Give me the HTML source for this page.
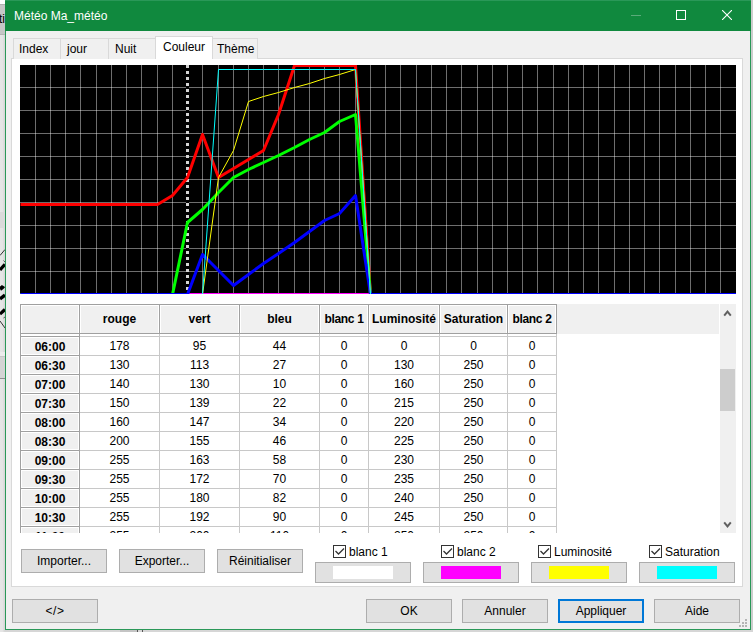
<!DOCTYPE html>
<html><head><meta charset="utf-8"><style>
*{margin:0;padding:0;box-sizing:border-box}
html,body{width:753px;height:632px;overflow:hidden;background:#e9e9e9;font-family:"Liberation Sans",sans-serif;font-size:12px;color:#000}
.abs{position:absolute}
.win{position:absolute;left:5px;top:0;width:746px;height:630px;background:#f0f0f0;border:1px solid #2a9858}
.title{position:absolute;left:5px;top:0;width:746px;height:31px;background:#10893e;border-top:1px solid #2a9858}
.tab{position:absolute;top:38px;height:21px;border:1px solid #d9d9d9;border-bottom:none;background:#f0f0f0;white-space:nowrap}
.tab span{position:absolute;top:3px}
.btn{position:absolute;height:24px;background:#e1e1e1;border:1px solid #adadad;text-align:center;line-height:22px;white-space:nowrap}
.hc{position:absolute;height:29px;background:#f0f0f0;box-shadow:inset 0 0 0 1px #fff;font-weight:bold;text-align:center;line-height:29px;white-space:nowrap}
.rh{position:absolute;height:18px;background:#f0f0f0;box-shadow:inset 0 0 0 1px #fff;font-weight:bold;text-align:center;line-height:20px}
.dc{position:absolute;height:18px;background:#fff;text-align:center;line-height:18px}
.cb{position:absolute;width:13px;height:13px;border:1px solid #333;background:#fff}
.cbl{position:absolute;white-space:nowrap}
</style></head><body>
<div class="abs" style="left:0;top:0;width:5px;height:5px;background:#fff"></div>
<div class="abs" style="left:0;top:4px;width:5px;height:31px;background:#c6c6c6;border-top:1px solid #b0b0b0;border-bottom:1px solid #b4b4b4;overflow:hidden"><div class="abs" style="left:-1px;top:7px;font-size:12px;color:#000;white-space:nowrap">ti</div></div>
<div class="abs" style="left:0;top:35px;width:5px;height:597px;background:linear-gradient(to right,#e6e6e6 0,#e4e4e4 3px,#d8d8d8 4px,#d8d8d8 5px)"></div>
<div class="abs" style="left:0;top:212px;width:5px;height:16px;background:#dadada"></div>
<div class="abs" style="left:0;top:352px;width:5px;height:4px;background:#ececec"></div><div class="abs" style="left:0;top:356px;width:5px;height:23px;background:#d4d4d4;border-top:1px solid #c6c6c6;border-bottom:1px solid #8e8e8e"></div>
<svg class="abs" style="left:0;top:240px" width="5" height="95"><g stroke="#000" fill="none">
<path d="M0 15.5 L5 9.5" stroke-width="1" stroke="#333"/>
<path d="M3.5 20.5 L5 22" stroke-width="1" stroke="#555"/>
<path d="M0 30 Q2.5 27 5 24.5" stroke-width="3.2"/>
<path d="M0 49 Q2.5 47.5 3.5 46" stroke-width="4"/>
<path d="M0 59 Q2.5 57 5 55" stroke-width="3.5"/>
<path d="M0 74 Q2.5 72 5 69.5" stroke-width="3.2"/>
<path d="M3.5 78 L5 77" stroke-width="1" stroke="#555"/>
<path d="M0 81 L5 88" stroke-width="1" stroke="#333"/>
</g></svg>
<div class="abs" style="left:751px;top:0;width:2px;height:632px;background:#cdcdcd"></div>
<div class="abs" style="left:5px;top:630px;width:748px;height:2px;background:#d6d6d6"></div>
<div class="abs" style="left:120px;top:630px;width:17px;height:2px;background:#c4c4c4"></div>
<div class="abs" style="left:137px;top:630px;width:1px;height:2px;background:#555"></div>
<div class="abs" style="left:142px;top:630px;width:1px;height:2px;background:#555"></div>
<div class="win"></div>
<div class="title"></div>
<div class="abs" style="left:14px;top:9px;color:#fff;font-size:12px;white-space:nowrap">Météo Ma_météo</div>
<div class="abs" style="left:631px;top:15px;width:10px;height:1px;background:#5aab7a"></div>
<div class="abs" style="left:676px;top:10px;width:10px;height:10px;border:1px solid #fff"></div>
<svg class="abs" style="left:722px;top:10px" width="10" height="10"><path d="M0 0 L10 10 M10 0 L0 10" stroke="#fff" stroke-width="1.1"/></svg>

<div class="abs" style="left:11px;top:58px;width:732px;height:529px;background:#fff;border:1px solid #d9d9d9"></div>
<div class="tab" style="left:13px;width:48px"><span style="left:5px">Index</span></div>
<div class="tab" style="left:60px;width:49px"><span style="left:6px">jour</span></div>
<div class="tab" style="left:108px;width:48px"><span style="left:6px">Nuit</span></div>
<div class="tab" style="left:212px;width:46px"><span style="left:4px">Thème</span></div>
<div class="tab" style="left:155px;top:36px;width:58px;height:23px;background:#fff"><span style="left:7px;top:3px">Couleur</span></div>

<svg width="716" height="229" viewBox="0 0 716 229" style="position:absolute;left:20px;top:65px;display:block">
<defs><clipPath id="cp"><rect x="0" y="0" width="716" height="229"/></clipPath></defs>
<rect x="0" y="0" width="716" height="229" fill="#000"/>
<rect x="15" y="0" width="1" height="228" fill="#fff" fill-opacity="0.43"/><rect x="30" y="0" width="1" height="228" fill="#fff" fill-opacity="0.43"/><rect x="45" y="0" width="1" height="228" fill="#fff" fill-opacity="0.43"/><rect x="60" y="0" width="1" height="228" fill="#fff" fill-opacity="0.43"/><rect x="76" y="0" width="1" height="228" fill="#fff" fill-opacity="0.43"/><rect x="91" y="0" width="1" height="228" fill="#fff" fill-opacity="0.43"/><rect x="106" y="0" width="1" height="228" fill="#fff" fill-opacity="0.43"/><rect x="121" y="0" width="1" height="228" fill="#fff" fill-opacity="0.43"/><rect x="137" y="0" width="1" height="228" fill="#fff" fill-opacity="0.43"/><rect x="152" y="0" width="1" height="228" fill="#fff" fill-opacity="0.43"/><rect x="167" y="0" width="1" height="228" fill="#fff" fill-opacity="0.43"/><rect x="182" y="0" width="1" height="228" fill="#fff" fill-opacity="0.43"/><rect x="198" y="0" width="1" height="228" fill="#fff" fill-opacity="0.43"/><rect x="213" y="0" width="1" height="228" fill="#fff" fill-opacity="0.43"/><rect x="228" y="0" width="1" height="228" fill="#fff" fill-opacity="0.43"/><rect x="243" y="0" width="1" height="228" fill="#fff" fill-opacity="0.43"/><rect x="258" y="0" width="1" height="228" fill="#fff" fill-opacity="0.43"/><rect x="274" y="0" width="1" height="228" fill="#fff" fill-opacity="0.43"/><rect x="289" y="0" width="1" height="228" fill="#fff" fill-opacity="0.43"/><rect x="304" y="0" width="1" height="228" fill="#fff" fill-opacity="0.43"/><rect x="319" y="0" width="1" height="228" fill="#fff" fill-opacity="0.43"/><rect x="335" y="0" width="1" height="228" fill="#fff" fill-opacity="0.43"/><rect x="350" y="0" width="1" height="228" fill="#fff" fill-opacity="0.43"/><rect x="365" y="0" width="1" height="228" fill="#fff" fill-opacity="0.43"/><rect x="380" y="0" width="1" height="228" fill="#fff" fill-opacity="0.43"/><rect x="396" y="0" width="1" height="228" fill="#fff" fill-opacity="0.43"/><rect x="411" y="0" width="1" height="228" fill="#fff" fill-opacity="0.43"/><rect x="426" y="0" width="1" height="228" fill="#fff" fill-opacity="0.43"/><rect x="441" y="0" width="1" height="228" fill="#fff" fill-opacity="0.43"/><rect x="457" y="0" width="1" height="228" fill="#fff" fill-opacity="0.43"/><rect x="472" y="0" width="1" height="228" fill="#fff" fill-opacity="0.43"/><rect x="487" y="0" width="1" height="228" fill="#fff" fill-opacity="0.43"/><rect x="502" y="0" width="1" height="228" fill="#fff" fill-opacity="0.43"/><rect x="517" y="0" width="1" height="228" fill="#fff" fill-opacity="0.43"/><rect x="533" y="0" width="1" height="228" fill="#fff" fill-opacity="0.43"/><rect x="548" y="0" width="1" height="228" fill="#fff" fill-opacity="0.43"/><rect x="563" y="0" width="1" height="228" fill="#fff" fill-opacity="0.43"/><rect x="578" y="0" width="1" height="228" fill="#fff" fill-opacity="0.43"/><rect x="594" y="0" width="1" height="228" fill="#fff" fill-opacity="0.43"/><rect x="609" y="0" width="1" height="228" fill="#fff" fill-opacity="0.43"/><rect x="624" y="0" width="1" height="228" fill="#fff" fill-opacity="0.43"/><rect x="639" y="0" width="1" height="228" fill="#fff" fill-opacity="0.43"/><rect x="655" y="0" width="1" height="228" fill="#fff" fill-opacity="0.43"/><rect x="670" y="0" width="1" height="228" fill="#fff" fill-opacity="0.43"/><rect x="685" y="0" width="1" height="228" fill="#fff" fill-opacity="0.43"/><rect x="700" y="0" width="1" height="228" fill="#fff" fill-opacity="0.43"/><rect x="0" y="22" width="716" height="1" fill="#fff" fill-opacity="0.43"/><rect x="0" y="45" width="716" height="1" fill="#fff" fill-opacity="0.43"/><rect x="0" y="68" width="716" height="1" fill="#fff" fill-opacity="0.43"/><rect x="0" y="91" width="716" height="1" fill="#fff" fill-opacity="0.43"/><rect x="0" y="114" width="716" height="1" fill="#fff" fill-opacity="0.43"/><rect x="0" y="137" width="716" height="1" fill="#fff" fill-opacity="0.43"/><rect x="0" y="160" width="716" height="1" fill="#fff" fill-opacity="0.43"/><rect x="0" y="183" width="716" height="1" fill="#fff" fill-opacity="0.43"/><rect x="0" y="206" width="716" height="1" fill="#fff" fill-opacity="0.43"/>
<rect x="166" y="0" width="3" height="228" fill="#000"/><line x1="167.5" y1="0" x2="167.5" y2="228" stroke="#d4d4d4" stroke-width="3" stroke-dasharray="3,3"/>
<g clip-path="url(#cp)" fill="none" stroke-linejoin="round" stroke-linecap="butt">
<polyline points="0.5,229.5 15.5,229.5 30.5,229.5 45.5,229.5 60.5,229.5 76.5,229.5 91.5,229.5 106.5,229.5 121.5,229.5 137.5,229.5 152.5,229.5 167.5,229.5 182.5,229.5 198.5,229.5 213.5,229.5 228.5,229.5 243.5,229.5 258.5,229.5 274.5,229.5 289.5,229.5 304.5,229.5 319.5,229.5 335.5,229.5 350.5,229.5 365.5,229.5 380.5,229.5 396.5,229.5 411.5,229.5 426.5,229.5 441.5,229.5 457.5,229.5 472.5,229.5 487.5,229.5 502.5,229.5 517.5,229.5 533.5,229.5 548.5,229.5 563.5,229.5 578.5,229.5 594.5,229.5 609.5,229.5 624.5,229.5 639.5,229.5 655.5,229.5 670.5,229.5 685.5,229.5 700.5,229.5 716.5,229.5" stroke="#ff00ff" stroke-width="3"/>
<polyline points="0.5,139.5 15.5,139.5 30.5,139.5 45.5,139.5 60.5,139.5 76.5,139.5 91.5,139.5 106.5,139.5 121.5,139.5 137.5,139.5 152.5,130.5 167.5,112.5 182.5,69.5 198.5,112.5 213.5,103.5 228.5,94.5 243.5,85.5 258.5,49.5 274.5,0.5 289.5,0.5 304.5,0.5 319.5,0.5 335.5,0.5 350.5,229.5 365.5,229.5 380.5,229.5 396.5,229.5 411.5,229.5 426.5,229.5 441.5,229.5 457.5,229.5 472.5,229.5 487.5,229.5 502.5,229.5 517.5,229.5 533.5,229.5 548.5,229.5 563.5,229.5 578.5,229.5 594.5,229.5 609.5,229.5 624.5,229.5 639.5,229.5 655.5,229.5 670.5,229.5 685.5,229.5 700.5,229.5 716.5,229.5" stroke="#ff0000" stroke-width="3"/>
<polyline points="0.5,229.5 15.5,229.5 30.5,229.5 45.5,229.5 60.5,229.5 76.5,229.5 91.5,229.5 106.5,229.5 121.5,229.5 137.5,229.5 152.5,229.5 167.5,157.5 182.5,144.5 198.5,127.5 213.5,112.5 228.5,104.5 243.5,97.5 258.5,90.5 274.5,82.5 289.5,74.5 304.5,67.5 319.5,56.5 335.5,49.5 350.5,229.5 365.5,229.5 380.5,229.5 396.5,229.5 411.5,229.5 426.5,229.5 441.5,229.5 457.5,229.5 472.5,229.5 487.5,229.5 502.5,229.5 517.5,229.5 533.5,229.5 548.5,229.5 563.5,229.5 578.5,229.5 594.5,229.5 609.5,229.5 624.5,229.5 639.5,229.5 655.5,229.5 670.5,229.5 685.5,229.5 700.5,229.5 716.5,229.5" stroke="#00ff00" stroke-width="3"/>
<polyline points="0.5,229.5 15.5,229.5 30.5,229.5 45.5,229.5 60.5,229.5 76.5,229.5 91.5,229.5 106.5,229.5 121.5,229.5 137.5,229.5 152.5,229.5 167.5,229.5 182.5,189.5 198.5,205.5 213.5,220.5 228.5,209.5 243.5,198.5 258.5,188.5 274.5,177.5 289.5,166.5 304.5,155.5 319.5,148.5 335.5,130.5 350.5,229.5 365.5,229.5 380.5,229.5 396.5,229.5 411.5,229.5 426.5,229.5 441.5,229.5 457.5,229.5 472.5,229.5 487.5,229.5 502.5,229.5 517.5,229.5 533.5,229.5 548.5,229.5 563.5,229.5 578.5,229.5 594.5,229.5 609.5,229.5 624.5,229.5 639.5,229.5 655.5,229.5 670.5,229.5 685.5,229.5 700.5,229.5 716.5,229.5" stroke="#0000ff" stroke-width="3"/>
<polyline points="182.5,229.5 198.5,112.5 213.5,85.5 228.5,36.5 243.5,31.5 258.5,27.5 274.5,22.5 289.5,18.5 304.5,13.5 319.5,9.5 335.5,4.5 350.5,229.5" stroke="#ffff00" stroke-width="1"/>
<polyline points="182.5,229.5 198.5,4.5 213.5,4.5 228.5,4.5 243.5,4.5 258.5,4.5 274.5,4.5 289.5,4.5 304.5,4.5 319.5,4.5 335.5,4.5 350.5,229.5" stroke="#00ffff" stroke-width="1"/>
</g>
</svg>

<div class="abs" style="left:20px;top:304px;width:716px;height:229px;background:#fff;overflow:hidden">
<div style="position:absolute;left:0px;top:0px;width:699px;height:30px;background:#f0f0f0"></div><div class="hc" style="left:1px;top:1px;width:58px;"></div><div class="hc" style="left:60px;top:1px;width:79px;">rouge</div><div class="hc" style="left:140px;top:1px;width:79px;">vert</div><div class="hc" style="left:220px;top:1px;width:79px;">bleu</div><div class="hc" style="left:300px;top:1px;width:48px;letter-spacing:-0.3px;">blanc 1</div><div class="hc" style="left:349px;top:1px;width:70px;">Luminosité</div><div class="hc" style="left:420px;top:1px;width:67px;">Saturation</div><div class="hc" style="left:488px;top:1px;width:48px;letter-spacing:-0.3px;">blanc 2</div><div class="rh" style="left:1px;top:33px;width:58px;">06:00</div><div class="dc" style="left:60px;top:33px;width:79px;">178</div><div class="dc" style="left:140px;top:33px;width:79px;">95</div><div class="dc" style="left:220px;top:33px;width:79px;">44</div><div class="dc" style="left:300px;top:33px;width:48px;">0</div><div class="dc" style="left:349px;top:33px;width:70px;">0</div><div class="dc" style="left:420px;top:33px;width:67px;">0</div><div class="dc" style="left:488px;top:33px;width:48px;">0</div><div class="rh" style="left:1px;top:52px;width:58px;">06:30</div><div class="dc" style="left:60px;top:52px;width:79px;">130</div><div class="dc" style="left:140px;top:52px;width:79px;">113</div><div class="dc" style="left:220px;top:52px;width:79px;">27</div><div class="dc" style="left:300px;top:52px;width:48px;">0</div><div class="dc" style="left:349px;top:52px;width:70px;">130</div><div class="dc" style="left:420px;top:52px;width:67px;">250</div><div class="dc" style="left:488px;top:52px;width:48px;">0</div><div class="rh" style="left:1px;top:71px;width:58px;">07:00</div><div class="dc" style="left:60px;top:71px;width:79px;">140</div><div class="dc" style="left:140px;top:71px;width:79px;">130</div><div class="dc" style="left:220px;top:71px;width:79px;">10</div><div class="dc" style="left:300px;top:71px;width:48px;">0</div><div class="dc" style="left:349px;top:71px;width:70px;">160</div><div class="dc" style="left:420px;top:71px;width:67px;">250</div><div class="dc" style="left:488px;top:71px;width:48px;">0</div><div class="rh" style="left:1px;top:90px;width:58px;">07:30</div><div class="dc" style="left:60px;top:90px;width:79px;">150</div><div class="dc" style="left:140px;top:90px;width:79px;">139</div><div class="dc" style="left:220px;top:90px;width:79px;">22</div><div class="dc" style="left:300px;top:90px;width:48px;">0</div><div class="dc" style="left:349px;top:90px;width:70px;">215</div><div class="dc" style="left:420px;top:90px;width:67px;">250</div><div class="dc" style="left:488px;top:90px;width:48px;">0</div><div class="rh" style="left:1px;top:109px;width:58px;">08:00</div><div class="dc" style="left:60px;top:109px;width:79px;">160</div><div class="dc" style="left:140px;top:109px;width:79px;">147</div><div class="dc" style="left:220px;top:109px;width:79px;">34</div><div class="dc" style="left:300px;top:109px;width:48px;">0</div><div class="dc" style="left:349px;top:109px;width:70px;">220</div><div class="dc" style="left:420px;top:109px;width:67px;">250</div><div class="dc" style="left:488px;top:109px;width:48px;">0</div><div class="rh" style="left:1px;top:128px;width:58px;">08:30</div><div class="dc" style="left:60px;top:128px;width:79px;">200</div><div class="dc" style="left:140px;top:128px;width:79px;">155</div><div class="dc" style="left:220px;top:128px;width:79px;">46</div><div class="dc" style="left:300px;top:128px;width:48px;">0</div><div class="dc" style="left:349px;top:128px;width:70px;">225</div><div class="dc" style="left:420px;top:128px;width:67px;">250</div><div class="dc" style="left:488px;top:128px;width:48px;">0</div><div class="rh" style="left:1px;top:147px;width:58px;">09:00</div><div class="dc" style="left:60px;top:147px;width:79px;">255</div><div class="dc" style="left:140px;top:147px;width:79px;">163</div><div class="dc" style="left:220px;top:147px;width:79px;">58</div><div class="dc" style="left:300px;top:147px;width:48px;">0</div><div class="dc" style="left:349px;top:147px;width:70px;">230</div><div class="dc" style="left:420px;top:147px;width:67px;">250</div><div class="dc" style="left:488px;top:147px;width:48px;">0</div><div class="rh" style="left:1px;top:166px;width:58px;">09:30</div><div class="dc" style="left:60px;top:166px;width:79px;">255</div><div class="dc" style="left:140px;top:166px;width:79px;">172</div><div class="dc" style="left:220px;top:166px;width:79px;">70</div><div class="dc" style="left:300px;top:166px;width:48px;">0</div><div class="dc" style="left:349px;top:166px;width:70px;">235</div><div class="dc" style="left:420px;top:166px;width:67px;">250</div><div class="dc" style="left:488px;top:166px;width:48px;">0</div><div class="rh" style="left:1px;top:185px;width:58px;">10:00</div><div class="dc" style="left:60px;top:185px;width:79px;">255</div><div class="dc" style="left:140px;top:185px;width:79px;">180</div><div class="dc" style="left:220px;top:185px;width:79px;">82</div><div class="dc" style="left:300px;top:185px;width:48px;">0</div><div class="dc" style="left:349px;top:185px;width:70px;">240</div><div class="dc" style="left:420px;top:185px;width:67px;">250</div><div class="dc" style="left:488px;top:185px;width:48px;">0</div><div class="rh" style="left:1px;top:204px;width:58px;">10:30</div><div class="dc" style="left:60px;top:204px;width:79px;">255</div><div class="dc" style="left:140px;top:204px;width:79px;">192</div><div class="dc" style="left:220px;top:204px;width:79px;">90</div><div class="dc" style="left:300px;top:204px;width:48px;">0</div><div class="dc" style="left:349px;top:204px;width:70px;">245</div><div class="dc" style="left:420px;top:204px;width:67px;">250</div><div class="dc" style="left:488px;top:204px;width:48px;">0</div><div class="rh" style="left:1px;top:223px;width:58px;">11:00</div><div class="dc" style="left:60px;top:223px;width:79px;">255</div><div class="dc" style="left:140px;top:223px;width:79px;">200</div><div class="dc" style="left:220px;top:223px;width:79px;">110</div><div class="dc" style="left:300px;top:223px;width:48px;">0</div><div class="dc" style="left:349px;top:223px;width:70px;">250</div><div class="dc" style="left:420px;top:223px;width:67px;">250</div><div class="dc" style="left:488px;top:223px;width:48px;">0</div><div style="position:absolute;left:0px;top:0px;width:537px;height:1px;background:#a0a0a0"></div><div style="position:absolute;left:0px;top:29px;width:537px;height:1px;background:#a0a0a0"></div><div style="position:absolute;left:0px;top:32px;width:60px;height:1px;background:#a0a0a0"></div><div style="position:absolute;left:60px;top:32px;width:477px;height:1px;background:#c8c8c8"></div><div style="position:absolute;left:0px;top:51px;width:60px;height:1px;background:#a0a0a0"></div><div style="position:absolute;left:60px;top:51px;width:477px;height:1px;background:#c8c8c8"></div><div style="position:absolute;left:0px;top:70px;width:60px;height:1px;background:#a0a0a0"></div><div style="position:absolute;left:60px;top:70px;width:477px;height:1px;background:#c8c8c8"></div><div style="position:absolute;left:0px;top:89px;width:60px;height:1px;background:#a0a0a0"></div><div style="position:absolute;left:60px;top:89px;width:477px;height:1px;background:#c8c8c8"></div><div style="position:absolute;left:0px;top:108px;width:60px;height:1px;background:#a0a0a0"></div><div style="position:absolute;left:60px;top:108px;width:477px;height:1px;background:#c8c8c8"></div><div style="position:absolute;left:0px;top:127px;width:60px;height:1px;background:#a0a0a0"></div><div style="position:absolute;left:60px;top:127px;width:477px;height:1px;background:#c8c8c8"></div><div style="position:absolute;left:0px;top:146px;width:60px;height:1px;background:#a0a0a0"></div><div style="position:absolute;left:60px;top:146px;width:477px;height:1px;background:#c8c8c8"></div><div style="position:absolute;left:0px;top:165px;width:60px;height:1px;background:#a0a0a0"></div><div style="position:absolute;left:60px;top:165px;width:477px;height:1px;background:#c8c8c8"></div><div style="position:absolute;left:0px;top:184px;width:60px;height:1px;background:#a0a0a0"></div><div style="position:absolute;left:60px;top:184px;width:477px;height:1px;background:#c8c8c8"></div><div style="position:absolute;left:0px;top:203px;width:60px;height:1px;background:#a0a0a0"></div><div style="position:absolute;left:60px;top:203px;width:477px;height:1px;background:#c8c8c8"></div><div style="position:absolute;left:0px;top:222px;width:60px;height:1px;background:#a0a0a0"></div><div style="position:absolute;left:60px;top:222px;width:477px;height:1px;background:#c8c8c8"></div><div style="position:absolute;left:0px;top:0px;width:1px;height:229px;background:#a0a0a0"></div><div style="position:absolute;left:59px;top:0px;width:1px;height:229px;background:#a0a0a0"></div><div style="position:absolute;left:139px;top:0px;width:1px;height:30px;background:#a0a0a0"></div><div style="position:absolute;left:139px;top:30px;width:1px;height:199px;background:#c8c8c8"></div><div style="position:absolute;left:219px;top:0px;width:1px;height:30px;background:#a0a0a0"></div><div style="position:absolute;left:219px;top:30px;width:1px;height:199px;background:#c8c8c8"></div><div style="position:absolute;left:299px;top:0px;width:1px;height:30px;background:#a0a0a0"></div><div style="position:absolute;left:299px;top:30px;width:1px;height:199px;background:#c8c8c8"></div><div style="position:absolute;left:348px;top:0px;width:1px;height:30px;background:#a0a0a0"></div><div style="position:absolute;left:348px;top:30px;width:1px;height:199px;background:#c8c8c8"></div><div style="position:absolute;left:419px;top:0px;width:1px;height:30px;background:#a0a0a0"></div><div style="position:absolute;left:419px;top:30px;width:1px;height:199px;background:#c8c8c8"></div><div style="position:absolute;left:487px;top:0px;width:1px;height:30px;background:#a0a0a0"></div><div style="position:absolute;left:487px;top:30px;width:1px;height:199px;background:#c8c8c8"></div><div style="position:absolute;left:536px;top:0px;width:1px;height:30px;background:#a0a0a0"></div><div style="position:absolute;left:536px;top:30px;width:1px;height:199px;background:#c8c8c8"></div>
</div>
<div class="abs" style="left:720px;top:304px;width:16px;height:229px;background:#f0f0f0"></div>
<div class="abs" style="left:720px;top:369px;width:15px;height:42px;background:#cdcdcd"></div>
<svg class="abs" style="left:723px;top:309px" width="9" height="8"><path d="M1.2 6.6 L4.5 2.6 L7.8 6.6" stroke="#606060" stroke-width="2" fill="none"/></svg>
<svg class="abs" style="left:723px;top:521px" width="9" height="8"><path d="M1.2 1.4 L4.5 5.4 L7.8 1.4" stroke="#606060" stroke-width="2" fill="none"/></svg>

<div class="btn" style="left:21px;top:549px;width:86px">Importer...</div>
<div class="btn" style="left:119px;top:549px;width:86px">Exporter...</div>
<div class="btn" style="left:217px;top:549px;width:86px">Réinitialiser</div>

<div class="btn" style="left:315px;top:562px;width:96px;height:21px"><div class="abs" style="left:17px;top:3px;width:60px;height:13px;background:#fff"></div></div>
<div class="btn" style="left:423px;top:562px;width:96px;height:21px"><div class="abs" style="left:17px;top:3px;width:60px;height:13px;background:#ff00ff"></div></div>
<div class="btn" style="left:531px;top:562px;width:96px;height:21px"><div class="abs" style="left:17px;top:3px;width:60px;height:13px;background:#ffff00"></div></div>
<div class="btn" style="left:639px;top:562px;width:96px;height:21px"><div class="abs" style="left:17px;top:3px;width:60px;height:13px;background:#00ffff"></div></div>

<div class="cb" style="left:333px;top:545px"><svg class="abs" style="left:0;top:0" width="11" height="11"><path d="M1.5 5 L4.5 8 L10 2.5" stroke="#333" stroke-width="1.3" fill="none"/></svg></div><div class="cbl" style="left:349px;top:545px">blanc 1</div><div class="cb" style="left:441px;top:545px"><svg class="abs" style="left:0;top:0" width="11" height="11"><path d="M1.5 5 L4.5 8 L10 2.5" stroke="#333" stroke-width="1.3" fill="none"/></svg></div><div class="cbl" style="left:457px;top:545px">blanc 2</div><div class="cb" style="left:538px;top:545px"><svg class="abs" style="left:0;top:0" width="11" height="11"><path d="M1.5 5 L4.5 8 L10 2.5" stroke="#333" stroke-width="1.3" fill="none"/></svg></div><div class="cbl" style="left:554px;top:545px">Luminosité</div><div class="cb" style="left:649px;top:545px"><svg class="abs" style="left:0;top:0" width="11" height="11"><path d="M1.5 5 L4.5 8 L10 2.5" stroke="#333" stroke-width="1.3" fill="none"/></svg></div><div class="cbl" style="left:665px;top:545px">Saturation</div>

<div class="btn" style="left:12px;top:599px;width:86px;letter-spacing:0.6px">&lt;/&gt;</div>
<div class="btn" style="left:366px;top:599px;width:86px">OK</div>
<div class="btn" style="left:462px;top:599px;width:86px">Annuler</div>
<div class="btn" style="left:558px;top:599px;width:86px;border:2px solid #0078d7;line-height:20px">Appliquer</div>
<div class="btn" style="left:654px;top:599px;width:86px">Aide</div>
<div class="abs" style="left:745px;top:619px;width:2px;height:2px;background:#b4b4b4"></div><div class="abs" style="left:742px;top:622px;width:2px;height:2px;background:#b4b4b4"></div><div class="abs" style="left:745px;top:622px;width:2px;height:2px;background:#b4b4b4"></div><div class="abs" style="left:739px;top:625px;width:2px;height:2px;background:#b4b4b4"></div><div class="abs" style="left:742px;top:625px;width:2px;height:2px;background:#b4b4b4"></div><div class="abs" style="left:745px;top:625px;width:2px;height:2px;background:#b4b4b4"></div>
</body></html>
